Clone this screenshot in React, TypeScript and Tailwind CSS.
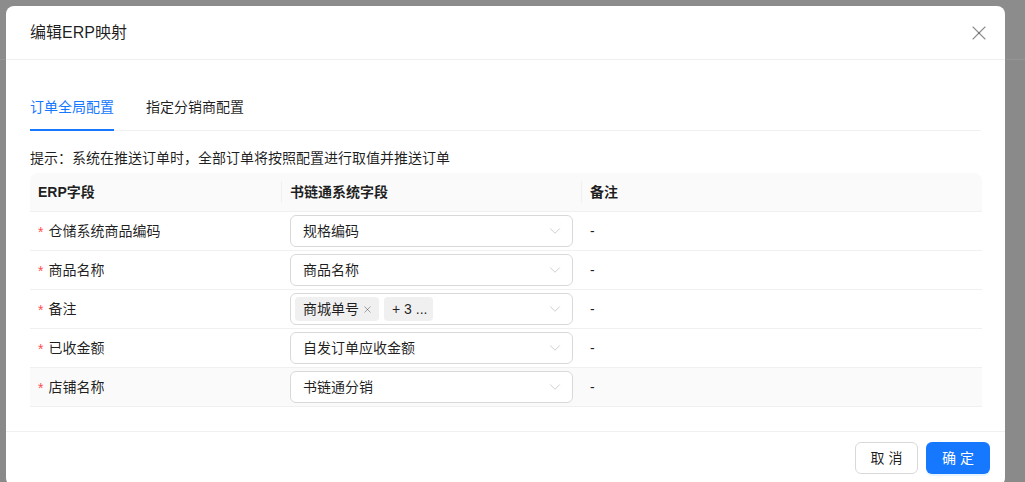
import { X, ChevronDown } from 'lucide-react';

interface MappingRow {
    field: string;
    value?: string;
    tags?: string[];
    note: string;
    hover?: boolean;
}

const rows: MappingRow[] = [
    { field: '仓储系统商品编码', value: '规格编码', note: '-' },
    { field: '商品名称', value: '商品名称', note: '-' },
    { field: '备注', tags: ['商城单号', '+ 3 ...'], note: '-' },
    { field: '已收金额', value: '自发订单应收金额', note: '-' },
    { field: '店铺名称', value: '书链通分销', note: '-', hover: true },
];

const font = "font-['Liberation_Sans','Noto_Sans_CJK_SC',sans-serif]";

const FieldSelect = ({ row }: { row: MappingRow }) => (
    <div className="flex h-8 w-[283px] items-center rounded-md border border-[#d9d9d9] bg-white pr-[8px]">
        {row.tags ? (
            <div className="flex flex-1 items-center gap-[5px] pl-[4px]">
                {row.tags.map((tag, i) => (
                    <span
                        key={tag}
                        className="flex h-6 items-center rounded-[4px] bg-[#f0f0f0] pl-2 pr-[6px] text-[14px] leading-[22px] text-[rgba(0,0,0,0.88)]"
                    >
                        {tag}
                        {i === 0 && (
                            <X className="ml-[3px] h-[11px] w-[11px] text-[rgba(0,0,0,0.45)]" strokeWidth={1.6} />
                        )}
                    </span>
                ))}
            </div>
        ) : (
            <span className="flex-1 pl-[12px] text-[14px] leading-[22px] text-[rgba(0,0,0,0.88)]">
                {row.value}
            </span>
        )}
        <ChevronDown className="h-[18px] w-[18px] text-[#c4c4c4]" strokeWidth={1.1} />
    </div>
);

export default function App() {
    return (
        <div className={`relative h-[482px] w-full overflow-hidden bg-[#8a8a8a] ${font}`}>
            {/* page behind the mask */}
            <div className="h-[60px] border-b border-[#949494] bg-[#8c8c8c]" />

            {/* modal */}
            <div className="absolute left-[6px] top-[6px] w-[999px] rounded-lg bg-white">
                <div className="flex h-[54px] items-center justify-between border-b border-[#f0f0f0] pl-6 pr-[14px]">
                    <span className="text-[16px] leading-6 text-[rgba(0,0,0,0.88)]">编辑ERP映射</span>
                    <X className="h-6 w-6 text-[rgba(0,0,0,0.45)]" strokeWidth={1.1} />
                </div>

                <div className="px-6 pb-6 pt-6">
                    {/* tabs */}
                    <div className="mb-4 flex gap-8 border-b border-[#f0f0f0]">
                        <div className="relative py-3 text-[14px] leading-[22px] text-[#1677ff]">
                            订单全局配置
                            <div className="absolute bottom-[-1px] left-0 right-0 h-[2px] bg-[#1677ff]" />
                        </div>
                        <div className="py-3 text-[14px] leading-[22px] text-[rgba(0,0,0,0.88)]">指定分销商配置</div>
                    </div>

                    <p className="mb-1 text-[14px] leading-[22px] text-[rgba(0,0,0,0.88)]">
                        提示：系统在推送订单时，全部订单将按照配置进行取值并推送订单
                    </p>

                    {/* table */}
                    <div className="mr-[-1px] text-[14px] leading-[22px] text-[rgba(0,0,0,0.88)]">
                        <div className="flex h-[39px] items-center rounded-t-lg border-b border-[#f0f0f0] bg-[#fafafa] font-semibold">
                            <div className="w-[251px] px-2">ERP字段</div>
                            <div className="h-[22px] w-px bg-[#f0f0f0]" />
                            <div className="w-[299px] px-2">书链通系统字段</div>
                            <div className="h-[22px] w-px bg-[#f0f0f0]" />
                            <div className="flex-1 px-2">备注</div>
                        </div>
                        {rows.map((row) => (
                            <div
                                key={row.field}
                                className={`flex h-[39px] items-center border-b border-[#f0f0f0] ${row.hover ? 'bg-[#fafafa]' : ''}`}
                            >
                                <div className="flex w-[252px] items-center px-2">
                                    <span className="mr-[5px] mt-[2px] text-[14px] text-[#ff4d4f]">*</span>
                                    {row.field}
                                </div>
                                <div className="w-[300px] pl-2">
                                    <FieldSelect row={row} />
                                </div>
                                <div className="flex-1 px-2">{row.note}</div>
                            </div>
                        ))}
                    </div>
                </div>

                {/* footer */}
                <div className="flex justify-end gap-2 border-t border-[#f0f0f0] px-[15px] pb-3 pt-[10px]">
                    <button className="h-8 w-[63px] rounded-md border border-[#d9d9d9] bg-white text-[14px] text-[rgba(0,0,0,0.88)]">
                        取 消
                    </button>
                    <button className="h-8 w-[64px] rounded-md bg-[#1677ff] text-[14px] text-white shadow-[0_2px_0_rgba(5,145,255,0.1)]">
                        确 定
                    </button>
                </div>
            </div>
        </div>
    );
}
